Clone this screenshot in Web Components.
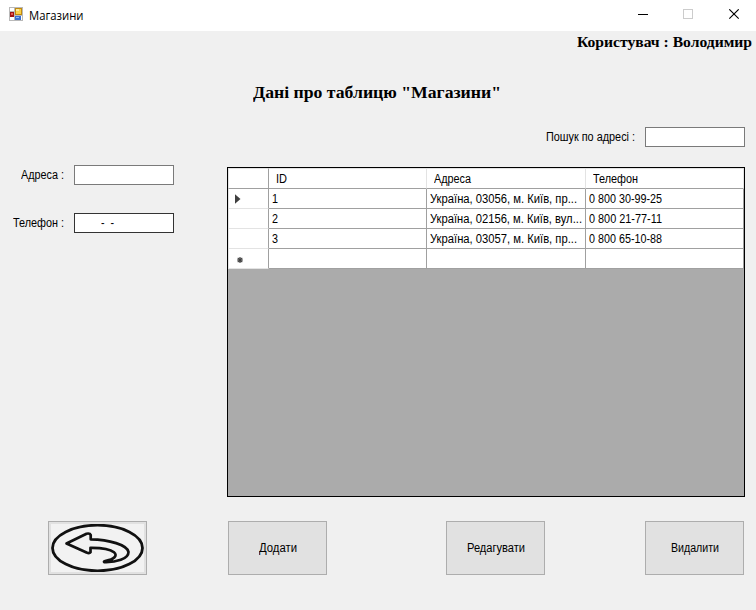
<!DOCTYPE html>
<html lang="uk"><head><meta charset="utf-8"><title>Магазини</title>
<style>
html,body{margin:0;height:100%;overflow:hidden}
</style></head><body>
<shop-window></shop-window>
<script>
const define=(name,html,setup)=>customElements.define(name,class extends HTMLElement{
  connectedCallback(){
    if(this.shadowRoot)return;
    this.attachShadow({mode:'open'}).innerHTML=html;
    if(setup)setup(this,this.shadowRoot);
  }
});

/* Single line of text, condensed or expanded to the width given in the w attribute */
define('fit-text',`<style>:host{display:inline-block;white-space:nowrap;flex:none}span{display:inline-block;white-space:pre;transform-origin:0 50%}</style><span></span>`,(el,root)=>{
  const s=root.querySelector('span');
  s.textContent=el.getAttribute('text');
  const w=parseFloat(el.getAttribute('w'));
  if(w){
    const natural=s.getBoundingClientRect().width;
    if(natural){s.style.transform='scaleX('+(w/natural)+')';el.style.width=w+'px';}
  }
});

define('title-bar',`<style>
:host{display:flex;height:31px;background:#fff;align-items:center;box-sizing:border-box;padding-left:9px;font:12px/16px "Open Sans","Noto Sans",sans-serif}
svg{display:block;flex:none}
fit-text{margin:0 auto 0 6px}
.app{margin-bottom:3px}
.ctl{margin-bottom:1px}
</style>
<svg class="app" width="14" height="14" viewBox="0 0 14 14" shape-rendering="crispEdges">
<rect width="14" height="14" fill="#b9b9b9"/><rect x="1" y="1" width="4" height="3" fill="#fff"/><rect x="1" y="10" width="4" height="3" fill="#fff"/><rect x="12" y="9" width="1" height="4" fill="#fff"/>
<rect x="1" y="5" width="4" height="5" fill="#a01414"/><rect x="2" y="6" width="2" height="2" fill="#e8584c"/>
<rect x="6" y="1" width="7" height="7" fill="#c08a10"/><rect x="7" y="2" width="5" height="5" fill="#fbd047"/><rect x="7" y="2" width="3" height="2" fill="#ffe99a"/>
<rect x="6" y="9" width="6" height="4" fill="#3a6fd0"/><rect x="7" y="10" width="3" height="1" fill="#8db8f4"/></svg>
<fit-text text="Магазини" w="54.5"></fit-text>
<svg class="ctl" width="118" height="12" viewBox="0 0 118 12">
<path d="M0 5.5h10" stroke="#000" shape-rendering="crispEdges"/>
<rect x="45.5" y=".5" width="9" height="9" fill="none" stroke="#ccc"/>
<path d="M91.3 .3l9.4 9.4M100.7 .3l-9.4 9.4" stroke="#000" stroke-width="1.1"/></svg>`);

define('text-field',`<style>
:host{display:block;box-sizing:border-box;width:100px;height:20px;border:1px solid #7a7a7a;background:#fff;flex:none;line-height:18px;white-space:pre}
:host([mask]){border-color:#333}
.v{padding-left:26px}
</style><div class="v"><slot></slot></div>`);

define('form-row',`<style>
:host{display:flex;height:20px;align-items:center;justify-content:flex-end;gap:10px}
</style><fit-text></fit-text><slot></slot>`,(el,root)=>{
  const t=document.createElement('fit-text');
  t.setAttribute('text',el.getAttribute('label'));t.setAttribute('w',el.getAttribute('w'));
  root.querySelector('fit-text').replaceWith(t);
});

define('push-button',`<style>
:host{display:flex;box-sizing:border-box;width:99px;height:54px;border:1px solid #adadad;background:#e1e1e1;align-items:center;justify-content:center;flex:none}
</style><slot></slot>`);

define('back-icon',`<style>:host{display:block}svg{display:block;background:#f2f2f2}</style>
<svg width="93" height="48" viewBox="0 0 93 48"><g fill="none" stroke="#111" stroke-linejoin="round">
<ellipse cx="46.5" cy="24" rx="45" ry="22.8" stroke-width="2.8"/>
<path d="M15.5 19.5L35.5 9.7Q39 9 39.7 11V15.3C58 15.5 76.5 21 77.5 28C77.5 35 65 38.5 53.5 38.2Q52 37.5 55 36.8C63 35.5 67 31.5 63 28.2C58 24.2 49 23.7 39.5 23.8V28.3Q38.5 29.7 35.5 28.6Z" stroke-width="2.7"/></g></svg>`);

define('data-grid',`<style>
:host{display:block;box-sizing:border-box;width:518px;height:330px;border:1px solid #000;background:#ababab;flex:none}
.g{display:grid;grid-template-columns:41px 158px 159px 158px;grid-template-rows:21px repeat(4,20px)}
.g>div{background:#fff;border-right:1px solid #a0a0a0;border-bottom:1px solid #a0a0a0;display:flex;align-items:center;padding-left:3px;overflow:hidden}
.g>.h{border-right-color:#e3e3e3;border-top:1px solid #e3e3e3;padding:0 0 0 7px}
.g>.h.l{border-right-color:#a0a0a0;border-left:1px solid #e3e3e3}
.g>.r{border-bottom-color:#e3e3e3;padding-left:6px;border-left:1px solid #e3e3e3}
</style><div class="g"></div>`,(el,root)=>{
  const g=root.querySelector('.g');
  const cell=(cls,html)=>{const d=document.createElement('div');d.className=cls;d.innerHTML=html;g.append(d);};
  const t=(s,w)=>s?`<fit-text text="${s}" w="${w}"></fit-text>`:'';
  cell('h l','');cell('h',t('ID',11));cell('h',t('Адреса',37));cell('h',t('Телефон',45));
  const rows=[['1','Україна, 03056, м. Київ, пр...',147,'0 800 30-99-25'],['2','Україна, 02156, м. Київ, вул...',152,'0 800 21-77-11'],['3','Україна, 03057, м. Київ, пр...',147,'0 800 65-10-88'],['','',0,'']];
  rows.forEach((r,i)=>{
    cell('r',i===0?'<svg width="6" height="10"><path d="M0 .3L5.5 5L0 9.7Z" fill="#404040"/></svg>':i===3?'<svg width="9" height="7" style="margin-left:2px;margin-top:3px"><path d="M3 0v6M0 3h6M.7 .9l4.6 4.2M5.3 .9L.7 5.1" stroke="#404040" stroke-width="1.2"/></svg>':'');
    cell('',t(r[0],6));cell('',t(r[1],r[2]));cell('',t(r[3],73));
  });
});

define('shop-window',`<style>
:host{display:flex;flex-direction:column;width:756px;height:610px;background:#f0f0f0;color:#000;font:12px/14px "Liberation Sans",Arial,sans-serif}
.user,.head{font-family:"Liberation Serif",serif;font-weight:bold}
.user{display:flex;justify-content:flex-end;height:20px;padding:1px 4px 0 0;font-size:14.5px;line-height:20px}
.head{display:flex;padding:31px 0 0 253px;height:44px;font-size:16px;line-height:20px}
.search{display:flex;justify-content:flex-end;padding-right:11px}
.main{display:flex;justify-content:space-between;padding:20px 11px 0 0;height:330px}
.form{display:flex;flex-direction:column;gap:28px;width:174px;margin-top:-2px}
.buttons{display:flex;padding:24px 12px 0 48px}
.buttons :nth-child(2){margin-left:81px}.buttons :nth-child(3){margin-left:119px}.buttons :nth-child(4){margin-left:100px}
</style>
<title-bar></title-bar>
<div class="user"><fit-text text="Користувач : Володимир" w="175"></fit-text></div>
<div class="head"><fit-text text="Дані про таблицю &quot;Магазини&quot;" w="248"></fit-text></div>
<div class="search"><form-row label="Пошук по адресі :" w="89"><text-field></text-field></form-row></div>
<div class="main"><div class="form">
<form-row label="Адреса :" w="43"><text-field></text-field></form-row>
<form-row label="Телефон :" w="51"><text-field mask><fit-text text="-  -" w="13"></fit-text></text-field></form-row>
</div><data-grid></data-grid></div>
<div class="buttons"><push-button><back-icon></back-icon></push-button><push-button><fit-text text="Додати" w="38"></fit-text></push-button><push-button><fit-text text="Редагувати" w="58"></fit-text></push-button><push-button><fit-text text="Видалити" w="48"></fit-text></push-button></div>`);
</script></body></html>
